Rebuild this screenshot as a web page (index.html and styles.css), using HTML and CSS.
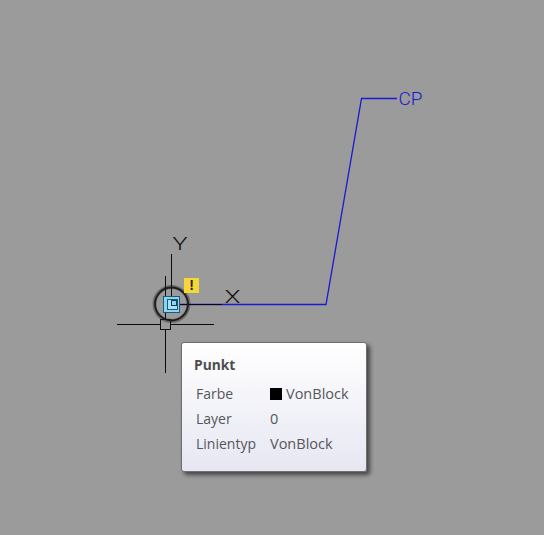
FILE: index.html
```html
<!DOCTYPE html>
<html lang="en">
<head>
    <meta charset="UTF-8">
    <meta name="viewport" content="width=device-width, initial-scale=1.0">
    <title>Punkt</title>
    <link rel="stylesheet" href="styles.css">
</head>
<body>

<div class="drawing">
    <svg class="canvas" width="544" height="535" viewBox="0 0 544 535">
        <!-- blue polyline with its label -->
        <polyline class="wire" points="180,304.5 326,304.5 361.5,98.5 397,98.5"/>
        <text class="label-cp" x="398.500" y="105" textLength="24" lengthAdjust="spacingAndGlyphs">CP</text>

        <!-- ucs icon -->
        <line class="axis" x1="171.5" y1="254" x2="171.5" y2="304"/>
        <line class="axis" x1="171.5" y1="304.5" x2="222" y2="304.5"/>
        <text class="label-axis" x="172.500" y="250" textLength="15" lengthAdjust="spacingAndGlyphs">Y</text>
        <text class="label-axis" x="224.500" y="303" textLength="16" lengthAdjust="spacingAndGlyphs">X</text>

        <!-- crosshair -->
        <line class="axis" x1="165.5" y1="276" x2="165.5" y2="373"/>
        <line class="axis" x1="117" y1="324.5" x2="214" y2="324.5"/>
        <rect class="pickbox" x="160.500" y="319.500" width="10" height="10"/>

        <!-- grip marker -->
        <circle class="halo-soft" cx="171.500" cy="304" r="17"/>
        <circle class="halo" cx="171.500" cy="304" r="16.500"/>
        <rect class="grip" x="163.500" y="296.500" width="16" height="16"/>
        <rect class="grip-inner" x="167.500" y="299.500" width="10" height="10"/>
        <rect class="grip-core" x="171.500" y="300.500" width="5" height="5"/>
    </svg>

    <div class="badge">!</div>

    <div class="tooltip">
        <h3>Punkt</h3>
        <div class="props">
            <span class="prop-name">Farbe</span>
            <span class="prop-value"><i class="swatch"></i>VonBlock</span>
            <span class="prop-name">Layer</span>
            <span class="prop-value">0</span>
            <span class="prop-name">Linientyp</span>
            <span class="prop-value">VonBlock</span>
        </div>
    </div>
</div>

</body>
</html>
```

FILE: styles.css
```css
body {
    margin: 0;
    padding: 0;
    background-color: #9b9b9b;
    font-family: 'Open Sans', 'Noto Sans', sans-serif;
}

.drawing {
    position: relative;
    width: 544px;
    height: 535px;
    overflow: hidden;
}

.canvas {
    display: block;
}

.wire {
    fill: none;
    stroke: #1a1ad0;
    stroke-width: 1.3;
}

.axis {
    stroke: #0a0a0a;
    stroke-width: 1;
}

.label-cp {
    font-family: 'Roboto', sans-serif;
    font-size: 18px;
    font-weight: 300;
    fill: #1a1ad0;
}

.label-axis {
    font-family: 'Roboto', sans-serif;
    font-size: 18px;
    font-weight: 300;
    fill: #111;
}

.pickbox {
    fill: #9b9b9b;
    stroke: #111;
    stroke-width: 1;
}

.halo-soft {
    fill: none;
    stroke: rgba(20, 20, 20, 0.35);
    stroke-width: 4;
}

.halo {
    fill: none;
    stroke: #1c1c1c;
    stroke-width: 1.8;
}

.grip {
    fill: #86d6ee;
    stroke: #1c5a78;
    stroke-width: 1;
}

.grip-inner {
    fill: #a5e2f4;
    stroke: #1c5a78;
    stroke-width: 1;
}

.grip-core {
    fill: #86d6ee;
    stroke: #123f5a;
    stroke-width: 1;
}

.badge {
    position: absolute;
    left: 184px;
    top: 278px;
    width: 15px;
    height: 15px;
    background-color: #f7d637;
    color: #222;
    font-family: 'Liberation Sans', sans-serif;
    font-size: 14px;
    font-weight: bold;
    line-height: 15px;
    text-align: center;
}

.tooltip {
    position: absolute;
    left: 181px;
    top: 342px;
    width: 186px;
    height: 130px;
    box-sizing: border-box;
    padding: 12px 12px 0 12px;
    background: linear-gradient(#ffffff, #e6e7f2);
    border: 1px solid #6e6e6e;
    border-radius: 3px;
    box-shadow: 3px 3px 4px rgba(0, 0, 0, 0.55);
    color: #55565c;
}

.tooltip h3 {
    margin: 0 0 6px 0;
    font-size: 13.8px;
    line-height: 20px;
    font-weight: bold;
    color: #4d4d50;
}

.props {
    display: grid;
    grid-template-columns: 74px auto;
    grid-auto-rows: 25px;
    padding-left: 2px;
    font-size: 14px;
    line-height: 25px;
}

.prop-value {
    display: flex;
    align-items: center;
    font-size: 14.5px;
}

.swatch {
    width: 12px;
    height: 12px;
    margin-right: 4px;
    background-color: #000;
}
```
